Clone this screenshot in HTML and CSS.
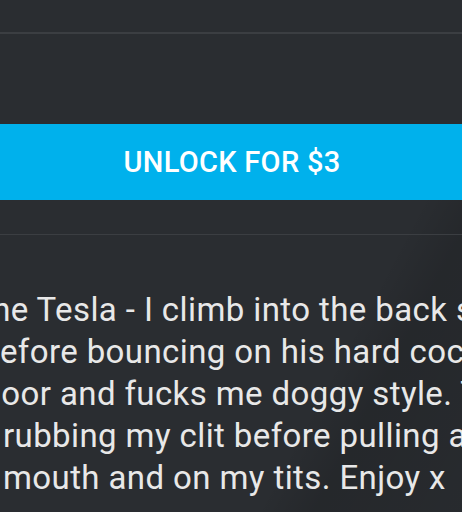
FILE: index.html
```html
<!doctype html>
<html lang="en">
  <head>
    <meta charset="utf-8">
    <title>Locked post</title>
    <meta name="viewport" content="width=device-width, initial-scale=1.0">
    <link rel="stylesheet" href="styles.css">
  </head>
  <body>
    <main class="post">
      <div class="post-top"></div>

      <div class="unlock">
        <button class="unlock-button" type="button">Unlock for $3</button>
      </div>

      <div class="post-body">
        <p class="post-text">
          <span class="line">the Tesla - I climb into the back seat</span>
          <span class="line">before bouncing on his hard cock</span>
          <span class="line">floor and fucks me doggy style. Then</span>
          <span class="line line--inset">rubbing my clit before pulling a</span>
          <span class="line line--inset">mouth and on my tits. Enjoy x</span>
        </p>
      </div>
    </main>
  </body>
</html>
```

FILE: styles.css
```css
:root {
  --bg: #2a2d31;
  --line: #3b3e42;
  --blue: #00b1ec;
  --fg: #e8e8e8;
}

html {
  background-color: var(--bg);
}

body {
  margin: 0;
  height: 512px;
  overflow: hidden;
  font-family: Roboto, "Liberation Sans", sans-serif;
  color: var(--fg);
}

.post {
  height: 100%;
  background: linear-gradient(
    118deg,
    transparent 0 72%,
    rgba(0, 0, 0, 0.12) 80%,
    rgba(0, 0, 0, 0.06) 100%
  );
}

.post-top {
  height: 32px;
  border-bottom: 2px solid var(--line);
}

.unlock {
  padding: 90px 0 34px;
  border-bottom: 1px solid var(--line);
}

.unlock-button {
  display: flex;
  align-items: center;
  justify-content: center;
  width: 100%;
  height: 76px;
  margin: 0;
  padding: 0 0 1px 2px;
  border: 0;
  background-color: var(--blue);
  color: #fff;
  font-family: inherit;
  font-size: 29px;
  font-weight: 500;
  letter-spacing: 0.3px;
  text-transform: uppercase;
}

.post-body {
  overflow: hidden;
  padding-top: 54px;
}

.post-text {
  margin: 0 0 0 -19px;
  font-size: 33px;
  line-height: 42px;
  letter-spacing: 0.4px;
}

.line {
  display: block;
  white-space: nowrap;
}

.line--inset {
  padding-left: 22px;
}
```
